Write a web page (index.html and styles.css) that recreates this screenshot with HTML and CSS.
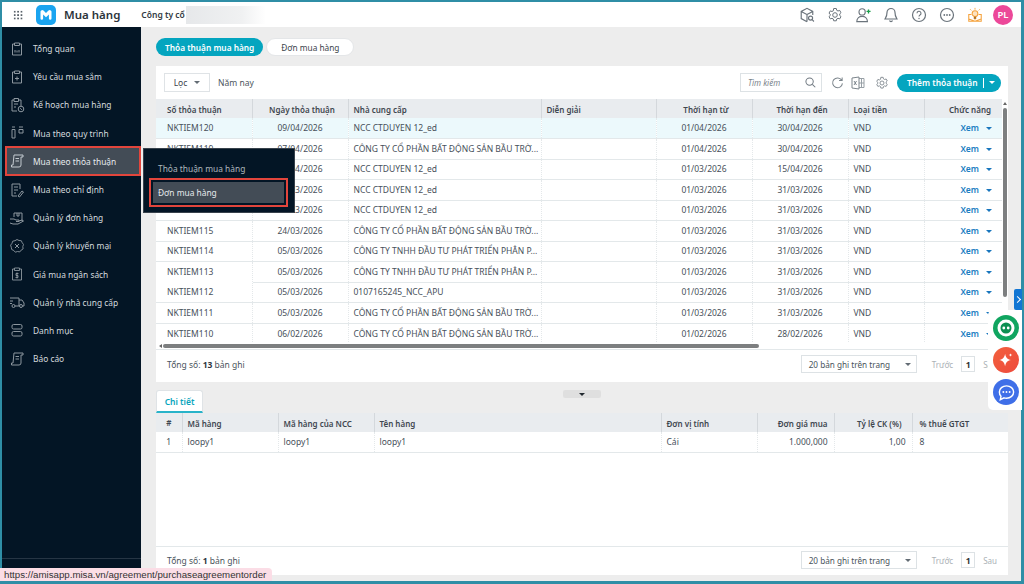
FILE: index.html
```html
<!DOCTYPE html>
<html lang="vi">
<head>
<meta charset="utf-8">
<title>Mua hàng</title>
<link rel="stylesheet" href="styles.css">
</head>
<body>
<svg class="defs" width="0" height="0" aria-hidden="true">
  <defs>
    <symbol id="clip" viewBox="0 0 16 16"><path d="M5 3H3.5v11h9V3H11M5.5 2h5v2.5h-5z" fill="none" stroke="currentColor"/><path d="M6 9v2.500M8 9.500v2M10 9v2.500" stroke="currentColor" fill="none"/></symbol>
    <symbol id="clipplus" viewBox="0 0 16 16"><path d="M5 3H3.5v11h9V3H11M5.5 2h5v2.5h-5z" fill="none" stroke="currentColor"/><path d="M8 7.500v4M6 9.500h4" stroke="currentColor"/></symbol>
    <symbol id="plan" viewBox="0 0 16 16"><path d="M10 3h2v6M5 3H3v11h5M5 1.500h4.500v3H5zM5 7h4M5 10h2" fill="none" stroke="currentColor"/><circle cx="12" cy="12" r="2.800" fill="none" stroke="currentColor"/><path d="M11 11l2 2" stroke="currentColor" stroke-width=".8"/></symbol>
    <symbol id="flow" viewBox="0 0 16 16"><path d="M3 2h3M10 2h4M3 4.500h3v8.500H3zM10 4.500h4v3.500h-4z" fill="none" stroke="currentColor"/></symbol>
    <symbol id="scroll" viewBox="0 0 16 16"><path d="M5 2h9v2h-2v8a2 2 0 0 1-2 2H2.500v-2H4zM6.500 5.500h3.500M6.500 8h3.500" fill="none" stroke="currentColor"/></symbol>
    <symbol id="assign" viewBox="0 0 16 16"><path d="M11 7V2H3v12h5M5 5h4M5 8h4M5 11h2M9 14l4-5 1.500 1-4 5z" fill="none" stroke="currentColor"/></symbol>
    <symbol id="box" viewBox="0 0 16 16"><path d="M5 3h8v8M5 3v4M8 3v3h2V3M1 9h4l2 1h3v1.500H7M10 11l3-1 1.500 1L9 14H4l-3-1" fill="none" stroke="currentColor"/></symbol>
    <symbol id="promo" viewBox="0 0 16 16"><path d="M8 1.500l2 1 2.300.2.900 2 1.300 1.800-.7 2.100.3 2.300-1.900 1.200-1.400 1.800-2.300-.4-2.200.7-1.500-1.700-2.100-1L2.300 9.300 1.600 7.200 3 5.300l.7-2.100L6 2.700z" fill="none" stroke="currentColor" stroke-width=".9"/><path d="M6 6l4 4M10 6l-4 4" stroke="currentColor"/></symbol>
    <symbol id="budget" viewBox="0 0 16 16"><path d="M5 3H3.500v11h9V3H11M5.500 2h5v2.500h-5zM9.500 7.500H7v2h2v2H6.500M8 6.500v6" fill="none" stroke="currentColor" stroke-width=".9"/></symbol>
    <symbol id="truck" viewBox="0 0 16 16"><path d="M1 4h9v8H6M10 6h3l2 3v3h-1M1 7h3M1 9.500h2" fill="none" stroke="currentColor"/><circle cx="4.500" cy="12" r="1.500" fill="none" stroke="currentColor"/><circle cx="12" cy="12" r="1.500" fill="none" stroke="currentColor"/></symbol>
    <symbol id="cat" viewBox="0 0 16 16"><rect x="3" y="2.500" width="10" height="4.500" rx="1.500" fill="none" stroke="currentColor"/><rect x="3" y="9.500" width="10" height="4.500" rx="1.500" fill="none" stroke="currentColor"/></symbol>
    <symbol id="gear" viewBox="0 0 16 16"><path d="M6.700 1.500h2.600l.4 1.800 1.300.7 1.700-.6 1.300 2.300-1.300 1.200v1.500l1.300 1.200-1.300 2.300-1.700-.6-1.300.7-.4 1.800H6.700l-.4-1.800-1.300-.7-1.700.6-1.300-2.300 1.300-1.200V7.400L2 6.200l1.300-2.300 1.700.6 1.300-.7z" fill="none" stroke="currentColor"/><circle cx="8" cy="8" r="2.300" fill="none" stroke="currentColor"/></symbol>
  </defs>
</svg>
<div class="frame">
  <header class="topbar">
    <span class="apps"></span>
    <span class="logo">
      <svg viewBox="0 0 20 20" width="20" height="20"><rect width="20" height="20" rx="5" fill="#1aa4f0"/><path d="M4.500 6.500a1.800 1.800 0 0 1 3-.9L10 8l2.500-2.400a1.800 1.800 0 0 1 3 .9v7a1.300 1.300 0 0 1-2.600 0V9.600L10 12.200 7.100 9.600v3.900a1.300 1.300 0 0 1-2.600 0z" fill="#fff"/></svg>
    </span>
    <span class="app-name">Mua hàng</span>
    <span class="company">Công ty cổ</span>
    <span class="blurred"></span>
    <span class="top-icons">
      <svg viewBox="0 0 18 18" width="16" height="16"><path d="M15.500 9V5L9 1.500 2.500 5v8L9 16.500M2.500 5L9 8.500v8M9 8.500L15.500 5" fill="none" stroke="#6b747c" stroke-width="1.300"/><circle cx="13" cy="12.500" r="2.300" fill="none" stroke="#6b747c" stroke-width="1.300"/><path d="M14.800 14.300l2 2" stroke="#6b747c" stroke-width="1.300"/></svg>
      <svg viewBox="0 0 16 16" width="16" height="16" class="i-gear"><use href="#gear"/></svg>
      <svg viewBox="0 0 18 18" width="16" height="16"><circle cx="8" cy="5.500" r="3.500" fill="none" stroke="#6b747c" stroke-width="1.300"/><path d="M2 16.500c0-8 12-8 12 0z" fill="none" stroke="#6b747c" stroke-width="1.300"/><path d="M13 5h4.500M15.200 2.800v4.400" stroke="#1b9e4b" stroke-width="1.500"/></svg>
      <svg viewBox="0 0 16 16" width="16" height="16"><path d="M8 1.500a4 4 0 0 1 4 4c0 4 1.500 5.500 2 6.500H2c.5-1 2-2.500 2-6.500a4 4 0 0 1 4-4zM6.500 13.500a1.600 1.600 0 0 0 3 0" fill="none" stroke="#6b747c" stroke-width="1.200"/></svg>
      <svg viewBox="0 0 16 16" width="16" height="16"><circle cx="8" cy="8" r="6.500" fill="none" stroke="#6b747c" stroke-width="1.200"/><path d="M6 6.300a2 2 0 1 1 3 1.700c-.7.400-1 .8-1 1.600" fill="none" stroke="#6b747c" stroke-width="1.100"/><circle cx="8" cy="11.500" r=".7" fill="#6b747c"/></svg>
      <svg viewBox="0 0 16 16" width="16" height="16"><circle cx="8" cy="8" r="6.500" fill="none" stroke="#6b747c" stroke-width="1.200"/><circle cx="5.300" cy="8" r=".9" fill="#6b747c"/><circle cx="8" cy="8" r=".9" fill="#6b747c"/><circle cx="10.700" cy="8" r=".9" fill="#6b747c"/></svg>
      <svg viewBox="0 0 18 18" width="16" height="16"><path d="M5 8.500H2V16h14V8.500h-3M2 13.500l7 2.500 7-2.500" fill="none" stroke="#f5a23c" stroke-width="1.200"/><circle cx="9" cy="7.500" r="3.200" fill="#fde3c0" stroke="#f5a23c" stroke-width="1.200"/><path d="M9 1v2M3.500 2.500l1.300 1.300M14.500 2.500l-1.300 1.300M8 11h2v2.500H8z" stroke="#f5a23c"/></svg>
      <span class="avatar">PL</span>
    </span>
  </header>
  <div class="main">
    <aside class="sidebar">
      <nav class="nav">
        <a class="nav-item"><svg><use href="#clip"/></svg>Tổng quan</a>
        <a class="nav-item"><svg><use href="#clipplus"/></svg>Yêu cầu mua sắm</a>
        <a class="nav-item"><svg><use href="#plan"/></svg>Kế hoạch mua hàng</a>
        <a class="nav-item"><svg><use href="#flow"/></svg>Mua theo quy trình</a>
        <a class="nav-item active"><svg><use href="#scroll"/></svg>Mua theo thỏa thuận</a>
        <a class="nav-item"><svg><use href="#assign"/></svg>Mua theo chỉ định</a>
        <a class="nav-item"><svg><use href="#box"/></svg>Quản lý đơn hàng</a>
        <a class="nav-item"><svg><use href="#promo"/></svg>Quản lý khuyến mại</a>
        <a class="nav-item"><svg><use href="#budget"/></svg>Giá mua ngân sách</a>
        <a class="nav-item"><svg><use href="#truck"/></svg>Quản lý nhà cung cấp</a>
        <a class="nav-item"><svg><use href="#cat"/></svg>Danh mục</a>
        <a class="nav-item"><svg><use href="#scroll"/></svg>Báo cáo</a>
      </nav>
      <div class="side-foot"></div>
    </aside>
    <main class="content">
      <div class="tabs">
        <span class="pill on">Thỏa thuận mua hàng</span>
        <span class="pill">Đơn mua hàng</span>
      </div>
      <section class="card">
        <div class="toolbar">
          <span class="filter">Lọc<i class="caret"></i></span>
          <span class="period">Năm nay</span>
          <span class="spacer"></span>
          <span class="search">Tìm kiếm
            <svg viewBox="0 0 12 12" width="11" height="11"><circle cx="5" cy="5" r="4" fill="none" stroke="#6f7880" stroke-width="1.100"/><path d="M8 8l3.200 3.200" stroke="#6f7880" stroke-width="1.100"/></svg>
          </span>
          <svg class="tool t-refresh" viewBox="0 0 14 14" width="13" height="13"><path d="M11.500 4.500A5.300 5.300 0 1 0 12.300 8M12 1.500v3.300H8.700" fill="none" stroke="#7c858c" stroke-width="1.100"/></svg>
          <svg class="tool t-xls" viewBox="0 0 14 14" width="14" height="14"><path d="M8 2.500h5v9H8" fill="none" stroke="#98a0a6"/><path d="M10.500 2.500v9M8 7h5" stroke="#98a0a6"/><path d="M1 2l7-1v12l-7-1z" fill="#fff" stroke="#7c858c"/><path d="M3 5l2.500 4M5.500 5L3 9" stroke="#7c858c"/></svg>
          <svg class="tool t-gear" viewBox="0 0 16 16" width="14" height="14"><use href="#gear"/></svg>
          <span class="add-btn">Thêm thỏa thuận<i class="sep"></i><i class="caret white"></i></span>
        </div>
        <div class="table-wrap">
          <table class="grid master">
            <colgroup><col class="c1"><col class="c2"><col class="c3"><col class="c4"><col class="c5"><col class="c6"><col class="c7"><col class="c8"></colgroup>
            <thead><tr><th>Số thỏa thuận</th><th class="ctr">Ngày thỏa thuận</th><th>Nhà cung cấp</th><th>Diễn giải</th><th class="ctr">Thời hạn từ</th><th class="ctr">Thời hạn đến</th><th>Loại tiền</th><th class="rt">Chức năng</th></tr></thead>
            <tbody>
              <tr class="sel"><td>NKTIEM120</td><td class="ctr">09/04/2026</td><td>NCC CTDUYEN 12_ed</td><td></td><td class="ctr">01/04/2026</td><td class="ctr">30/04/2026</td><td>VND</td><td class="act"><b>Xem</b><i class="caret link"></i></td></tr>
              <tr><td>NKTIEM119</td><td class="ctr">07/04/2026</td><td>CÔNG TY CỔ PHẦN BẤT ĐỘNG SẢN BẦU TRỜ...</td><td></td><td class="ctr">01/04/2026</td><td class="ctr">30/04/2026</td><td>VND</td><td class="act"><b>Xem</b><i class="caret link"></i></td></tr>
              <tr><td>NKTIEM118</td><td class="ctr">04/04/2026</td><td>NCC CTDUYEN 12_ed</td><td></td><td class="ctr">01/03/2026</td><td class="ctr">15/04/2026</td><td>VND</td><td class="act"><b>Xem</b><i class="caret link"></i></td></tr>
              <tr><td>NKTIEM117</td><td class="ctr">24/03/2026</td><td>NCC CTDUYEN 12_ed</td><td></td><td class="ctr">01/03/2026</td><td class="ctr">31/03/2026</td><td>VND</td><td class="act"><b>Xem</b><i class="caret link"></i></td></tr>
              <tr><td>NKTIEM116</td><td class="ctr">24/03/2026</td><td>NCC CTDUYEN 12_ed</td><td></td><td class="ctr">01/03/2026</td><td class="ctr">31/03/2026</td><td>VND</td><td class="act"><b>Xem</b><i class="caret link"></i></td></tr>
              <tr><td>NKTIEM115</td><td class="ctr">24/03/2026</td><td>CÔNG TY CỔ PHẦN BẤT ĐỘNG SẢN BẦU TRỜ...</td><td></td><td class="ctr">01/03/2026</td><td class="ctr">31/03/2026</td><td>VND</td><td class="act"><b>Xem</b><i class="caret link"></i></td></tr>
              <tr><td>NKTIEM114</td><td class="ctr">05/03/2026</td><td>CÔNG TY TNHH ĐẦU TƯ PHÁT TRIỂN PHÂN P...</td><td></td><td class="ctr">01/03/2026</td><td class="ctr">31/03/2026</td><td>VND</td><td class="act"><b>Xem</b><i class="caret link"></i></td></tr>
              <tr><td class="nob">NKTIEM113</td><td class="ctr">05/03/2026</td><td>CÔNG TY TNHH ĐẦU TƯ PHÁT TRIỂN PHÂN P...</td><td></td><td class="ctr">01/03/2026</td><td class="ctr">31/03/2026</td><td>VND</td><td class="act"><b>Xem</b><i class="caret link"></i></td></tr>
              <tr><td>NKTIEM112</td><td class="ctr">05/03/2026</td><td>0107165245_NCC_APU</td><td></td><td class="ctr">01/03/2026</td><td class="ctr">31/03/2026</td><td>VND</td><td class="act"><b>Xem</b><i class="caret link"></i></td></tr>
              <tr><td>NKTIEM111</td><td class="ctr">05/03/2026</td><td>CÔNG TY CỔ PHẦN BẤT ĐỘNG SẢN BẦU TRỜ...</td><td></td><td class="ctr">01/03/2026</td><td class="ctr">31/03/2026</td><td>VND</td><td class="act"><b>Xem</b><i class="caret link"></i></td></tr>
              <tr class="last"><td>NKTIEM110</td><td class="ctr">06/02/2026</td><td>CÔNG TY CỔ PHẦN BẤT ĐỘNG SẢN BẦU TRỜ...</td><td></td><td class="ctr">01/02/2026</td><td class="ctr">28/02/2026</td><td>VND</td><td class="act"><b>Xem</b><i class="caret link"></i></td></tr>
            </tbody>
          </table>
          <div class="vscroll"><i class="up"></i><i class="thumb"></i></div>
        </div>
        <div class="hscroll"><i class="left"></i><i class="hthumb"></i></div>
        <div class="pager master-pager">
          <span class="total">Tổng số: <b>13</b> bản ghi</span>
          <span class="spacer"></span>
          <span class="size">20 bản ghi trên trang<i class="caret"></i></span>
          <span class="pg">Trước</span><span class="num">1</span><span class="pg">Sau</span>
        </div>
      </section>
      <section class="detail">
        <div class="tabstrip"><span class="dtab">Chi tiết</span><span class="grip"><i class="caret dark"></i></span></div>
        <div class="dbody">
          <table class="grid sub">
            <colgroup><col class="d1"><col class="d2"><col class="d3"><col class="d4"><col class="d5"><col class="d6"><col class="d7"><col class="d8"></colgroup>
            <thead><tr><th class="ctr">#</th><th>Mã hàng</th><th>Mã hàng của NCC</th><th>Tên hàng</th><th>Đơn vị tính</th><th class="rt">Đơn giá mua</th><th class="rt wide">Tỷ lệ CK (%)</th><th>% thuế GTGT</th></tr></thead>
            <tbody><tr><td class="ctr">1</td><td>loopy1</td><td>loopy1</td><td>loopy1</td><td>Cái</td><td class="rt">1.000,000</td><td class="rt">1,00</td><td>8</td></tr></tbody>
          </table>
        </div>
        <div class="pager dpager">
          <span class="total">Tổng số: <b>1</b> bản ghi</span>
          <span class="spacer"></span>
          <span class="size">20 bản ghi trên trang<i class="caret"></i></span>
          <span class="pg">Trước</span><span class="num">1</span><span class="pg">Sau</span>
        </div>
      </section>
    </main>
  </div>
</div>

<div class="flyout">
  <div class="fly-item">Thỏa thuận mua hàng</div>
  <div class="fly-item hot">Đơn mua hàng</div>
</div>
<span class="side-tab"></span>
<div class="widgets">
  <span class="w w-green"><svg viewBox="0 0 20 20" width="20" height="20"><circle cx="10" cy="10" r="7" fill="#0c8f52" stroke="#fff" stroke-width="3"/><circle cx="7.800" cy="10" r="1.400" fill="#fff"/><circle cx="12.200" cy="10" r="1.400" fill="#fff"/></svg></span>
  <span class="w w-red"><svg viewBox="0 0 20 20" width="18" height="18"><path d="M9 3c.9 4.500 2.300 6 6.500 7-4.200 1-5.600 2.500-6.500 7-.9-4.500-2.300-6-6.500-7 4.200-1 5.600-2.500 6.500-7z" fill="#fff"/><path d="M15 2.500c.3 1.300.7 1.700 2 2-1.300.3-1.700.7-2 2-.3-1.300-.7-1.700-2-2 1.300-.3 1.700-.7 2-2z" fill="#fff"/></svg></span>
  <span class="w w-blue"><svg viewBox="0 0 20 20" width="19" height="19"><path d="M10 3c4.200 0 7.500 2.900 7.500 6.500S14.200 16 10 16c-.9 0-1.800-.1-2.600-.4L3.500 17.500l.7-3.500C3 12.900 2.500 11.300 2.500 9.500 2.500 5.900 5.800 3 10 3z" fill="#3f6fe8" stroke="#fff" stroke-width="1.500"/><circle cx="6.700" cy="9.500" r="1" fill="#fff"/><circle cx="10" cy="9.500" r="1" fill="#fff"/><circle cx="13.300" cy="9.500" r="1" fill="#fff"/></svg></span>
</div>
<div class="status">https://amisapp.misa.vn/agreement/purchaseagreementorder</div>
</body>
</html>
```

FILE: styles.css
```css
* { box-sizing: border-box; }
html, body { margin: 0; height: 100%; overflow: hidden; }
body { font-family: "Noto Sans", "Open Sans", sans-serif; font-size: 8.5px; color: #3c444c; background: #2f8ea6; }
.defs { position: absolute; }
.frame { height: 584px; padding: 2px 3px 3px 2px; display: flex; flex-direction: column; }

/* top bar */
.topbar { height: 25px; background: #fff; display: flex; align-items: center; flex: none; }
.apps { width: 10px; height: 10px; margin-left: 11px; flex: none; background-image: radial-gradient(circle, #59626a 1px, transparent 1.3px); background-size: 3.4px 3.4px; }
.logo { margin-left: 13px; display: flex; }
.app-name { margin-left: 8px; font-size: 11.5px; font-weight: 600; color: #2b333b; }
.company { margin-left: 21px; font-size: 8.5px; font-weight: 600; color: #333b43; }
.blurred { width: 80px; height: 18px; background: linear-gradient(90deg, #e6e8ea, #f0f1f2 70%, #fff); margin-left: 1px; }
.top-icons { margin-left: auto; display: flex; align-items: center; gap: 12px; padding-right: 8px; }
.i-gear { color: #6b747c; }
.avatar { width: 20px; height: 20px; border-radius: 50%; background: #ec4899; color: #fff; font-size: 9.5px; font-weight: 600; display: flex; align-items: center; justify-content: center; margin-left: -2px; }

.main { flex: 1; display: flex; min-height: 0; }

/* sidebar */
.sidebar { width: 139px; background: #031525; flex: none; display: flex; flex-direction: column; }
.nav { padding-top: 7.5px; display: flex; flex-direction: column; flex: 1; }
.nav-item { height: 28.2px; flex: none; display: flex; align-items: center; color: #d4dade; font-size: 8.4px; padding-left: 7px; gap: 8px; }
.nav-item svg { width: 16px; height: 16px; color: #8d979f; flex: none; }
.nav-item.active { margin: -1px 0 -0.8px 3px; height: 30px; padding-left: 2px; background: #434c56; border: 2px solid #e2453c; color: #e6eaed; }
.nav-item.active svg { color: #c4cad0; }
.side-foot { height: 1px; background: #263544; margin-bottom: 22px; }

/* content */
.content { flex: 1; background: #ededed; padding: 11px 13px 0 15px; min-width: 0; display: flex; flex-direction: column; }
.tabs { display: flex; gap: 3px; height: 18px; flex: none; }
.pill { height: 18px; border-radius: 9px; background: #fff; padding: 0 14px; display: flex; align-items: center; color: #3c444c; font-size: 8.3px; border: 1px solid #e4e6e8; }
.pill.on { background: #04a5bf; color: #fff; font-weight: 600; padding: 0 9px; border: 0; }

.card { margin-top: 10px; background: #fff; height: 316px; flex: none; display: flex; flex-direction: column; }
.toolbar { height: 33px; display: flex; align-items: center; padding: 0 7px 0 8px; flex: none; }
.filter { width: 46px; height: 19px; border: 1px solid #dfe3e6; display: flex; align-items: center; justify-content: center; gap: 7px; }
.period { margin-left: 8px; color: #4c555d; }
.spacer { flex: 1; }
.search { width: 82px; height: 19px; border: 1px solid #dde2e5; display: flex; align-items: center; justify-content: space-between; padding: 0 5px 0 7px; font-style: italic; font-size: 8px; color: #7b848b; }
.tool { flex: none; color: #7c858c; }
.t-refresh { margin-left: 9px; }
.t-xls { margin-left: 7px; }
.t-gear { margin-left: 10px; }
.add-btn { margin-left: 8px; width: 104px; height: 18px; border-radius: 9px; background: #04a5bf; color: #fff; font-weight: 600; font-size: 8.4px; display: flex; align-items: center; padding-left: 10px; }
.sep { width: 1px; height: 10px; background: #fff; margin: 0 5px; }

.caret { display: inline-block; width: 0; height: 0; border: 3px solid transparent; border-top: 3.5px solid #636c74; border-bottom: 0; }
.caret.white { border-top-color: #fff; }
.caret.link { border-top-color: #1976bd; margin-left: 7px; vertical-align: 1px; }
.caret.dark { border-top-color: #22292f; }

.table-wrap { display: flex; height: 243px; flex: none; overflow: hidden; }
.grid { border-collapse: collapse; table-layout: fixed; width: 846px; font-size: 8.5px; }
.c1 { width: 96px; } .c2 { width: 96px; } .c3 { width: 193px; } .c4 { width: 115px; }
.c5 { width: 96px; } .c6 { width: 96px; } .c7 { width: 76px; } .c8 { width: 78px; }
.grid th { height: 19px; background: #e9ecef; font-weight: 600; color: #3f474f; text-align: left; padding: 1px 6px 0 11px; font-size: 8px; border-right: 1px solid #d4d8dc; white-space: nowrap; }
.grid th:nth-child(n+2) { padding-left: 5px; }
.grid th.ctr { padding-left: 9px; padding-right: 5px; }
.grid th:last-child { border-right: 0; }
.master th:last-child { padding-right: 11px; }
.grid td { height: 20.5px; border-bottom: 1px solid #e3e8ea; border-right: 1px dotted #e4e8ea; padding: 0 5px 1px; white-space: nowrap; overflow: hidden; color: #47505a; }
.grid td:first-child { padding-left: 11px; }
.grid td:last-child { border-right: 0; }
.grid .ctr { text-align: center; padding-left: 5px; }
.grid .rt { text-align: right; padding-right: 6px; }
.grid th.wide { padding-right: 10px; }
.grid td.nob { border-bottom-color: transparent; }
.sel td { background: #ecf9fc; }
.last td { border-bottom: 0; }
.act { text-align: right; padding-right: 10px !important; }
.act b { color: #1b7ec2; font-weight: 600; }

.vscroll { width: 6px; flex: none; display: flex; flex-direction: column; align-items: center; padding-top: 3px; gap: 3px; }
.up { width: 0; height: 0; border: 2px solid transparent; border-bottom: 3px solid #666; border-top: 0; }
.thumb { width: 4px; height: 189px; background: #7d7f80; border-radius: 2px; }

.hscroll { height: 7px; flex: none; display: flex; align-items: center; padding-left: 3px; gap: 1px; }
.left { width: 0; height: 0; border: 2px solid transparent; border-right: 3px solid #666; border-left: 0; }
.hthumb { width: 596px; height: 4px; background: #7d7f80; border-radius: 2px; }

.pager { flex: 1; display: flex; align-items: center; padding: 0 11px 0 11px; border-top: 1px solid #e3e8ea; }
.master-pager { padding-bottom: 4px; }
.total { color: #4a535b; }
.total b { font-weight: 700; color: #2f373f; }
.size { width: 116px; height: 18px; border: 1px solid #dde2e5; display: flex; align-items: center; justify-content: space-between; padding: 0 5px 0 7px; font-size: 8.2px; color: #4a535b; margin-right: 15px; }
.pg { color: #abb1b6; font-size: 8px; }
.num { width: 14px; height: 16px; border: 1px solid #dde2e5; display: flex; align-items: center; justify-content: center; font-weight: 700; margin: 0 8px; color: #333; }

.detail { flex: 1; display: flex; flex-direction: column; min-height: 0; margin-top: 8px; }
.tabstrip { height: 23px; flex: none; display: flex; align-items: flex-start; }
.dtab { display: inline-flex; width: 47px; height: 23px; background: #fff; border: 1px solid #dfe3e6; border-bottom: 2px solid #28b3c9; border-radius: 3px 3px 0 0; align-items: center; justify-content: center; color: #0aa5bd; font-weight: 600; font-size: 8.5px; }
.grip { width: 38px; height: 8px; margin-left: 360px; background: #dfdfdf; border-radius: 2px; display: flex; align-items: center; justify-content: center; }
.dbody { background: #fff; height: 134px; flex: none; border-bottom: 1px solid #e3e8ea; }
.sub { width: 852px; }
.d1 { width: 26px; } .d2 { width: 96px; } .d3 { width: 96px; } .d4 { width: 287px; }
.d5 { width: 96px; } .d6 { width: 77px; } .d7 { width: 78px; } .d8 { width: 96px; }
.sub th:first-child, .sub td:first-child { padding: 0; text-align: center; }
.sub td { height: 20px; }
.sub th:last-child { padding-left: 7px; }
.sub td:last-child { padding-left: 7px; }
.dpager { flex: none; height: 28px; background: #fff; border-top: 0; padding-bottom: 2px; }

/* overlays */
.flyout { position: absolute; left: 143px; top: 148px; width: 152px; height: 65px; background: #031525; border: 1px solid #38424c; padding-top: 10px; z-index: 5; }
.fly-item { height: 18px; margin: 0 6px 0 5px; color: #aeb6bc; display: flex; align-items: center; padding-left: 9px; font-size: 8.4px; }
.fly-item.hot { height: 29px; margin-top: 1px; padding-left: 7px; background: #434c56; color: #e6eaed; border: 2px solid #e2453c; box-shadow: inset 0 0 0 2px #031525; }
.side-tab { position: absolute; left: 1014px; top: 289px; width: 8px; height: 21px; background: #1276d3; border-radius: 2px 0 0 2px; }
.side-tab::after { content: ""; position: absolute; left: 1px; top: 8px; width: 4px; height: 4px; border: solid #fff; border-width: 1px 1px 0 0; transform: rotate(45deg); }
.widgets { position: absolute; left: 988px; top: 310px; width: 34px; height: 100px; background: #fff; border-radius: 5px 0 0 5px; display: flex; flex-direction: column; align-items: center; gap: 6px; padding-top: 5px; padding-left: 4px; padding-right: 2px; z-index: 4; }
.w { width: 26px; height: 26px; border-radius: 50%; display: flex; align-items: center; justify-content: center; flex: none; }
.w-green { background: #10a560; }
.w-red { background: linear-gradient(135deg, #f2603c, #ee4a3d); }
.w-blue { background: #3f6fe8; }
.status { position: absolute; left: 0; top: 568px; width: 272px; height: 13px; background: #fbdde6; border-radius: 0 4px 0 0; font-family: "Liberation Sans", Arial, sans-serif; font-size: 9.7px; color: #333; padding: 1px 0 0 4px; line-height: 12px; z-index: 6; white-space: nowrap; }
```
